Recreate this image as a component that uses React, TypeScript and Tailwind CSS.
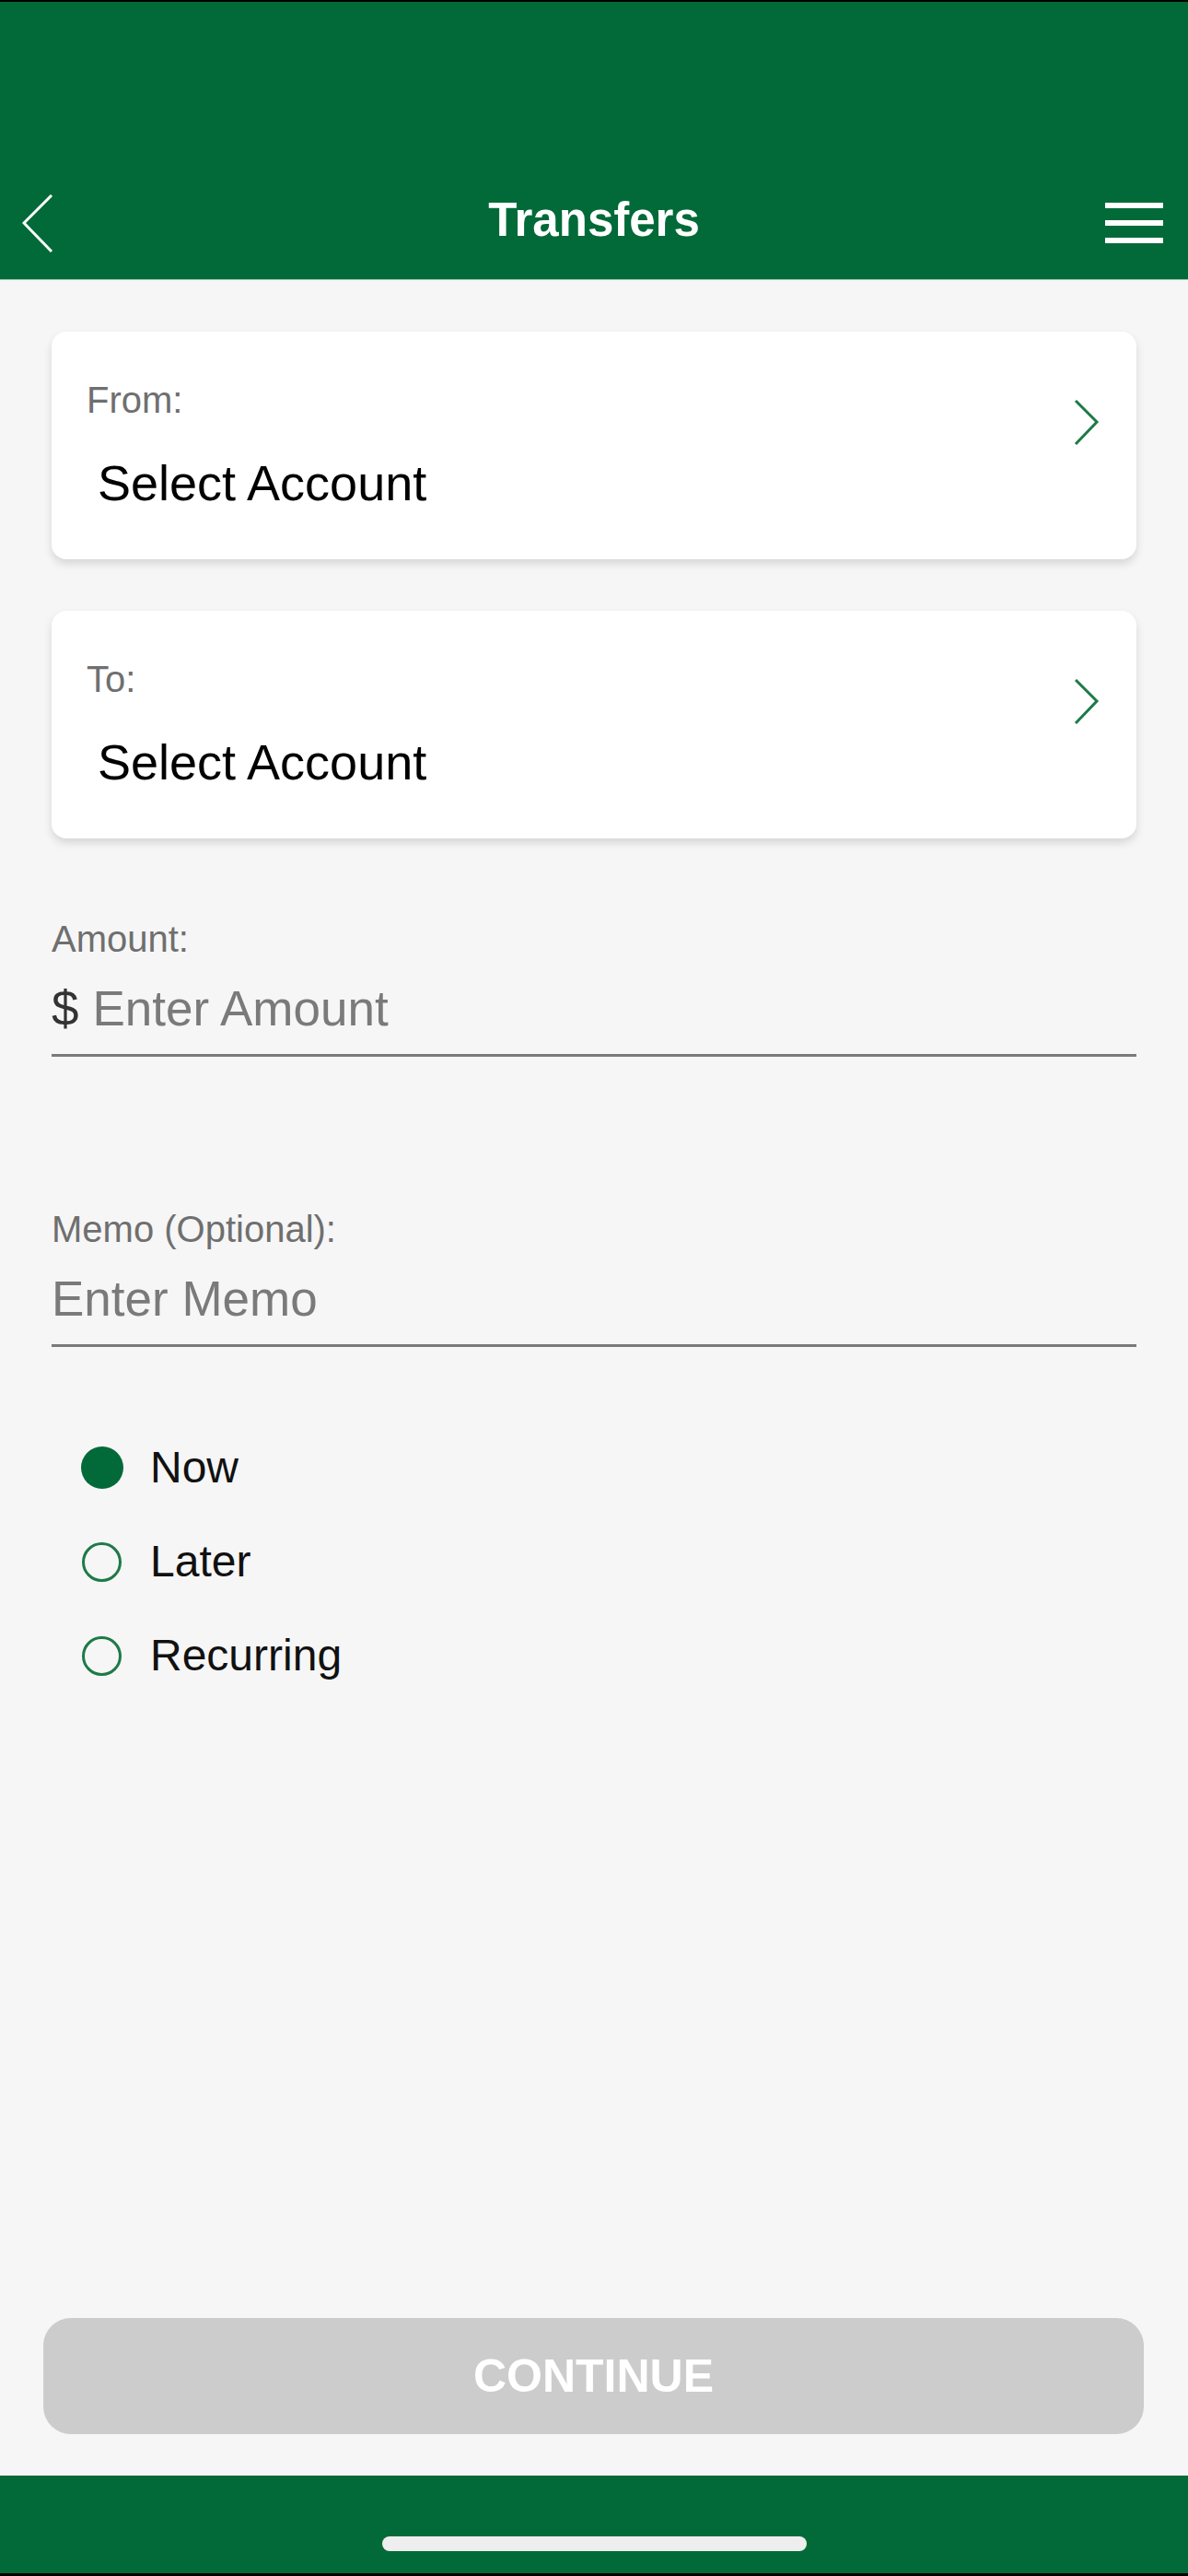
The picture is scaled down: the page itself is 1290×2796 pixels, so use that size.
import { useState } from "react";

function Chevron({ dir, className }: { dir: "left" | "right"; className?: string }) {
  // thin iOS style chevrons
  if (dir === "left") {
    return (
      <svg width="34" height="64" viewBox="0 0 34 64" className={className}>
        <polyline points="32,1 2,31 32,62" fill="none" stroke="white" strokeWidth="3" />
      </svg>
    );
  }
  return (
    <svg width="28" height="50" viewBox="0 0 28 50" className={className}>
      <polyline points="2,1 25,24 2,48" fill="none" stroke="#1d7a47" strokeWidth="3" />
    </svg>
  );
}

function AccountCard({ label }: { label: string }) {
  return (
    <div className="flex h-[247px] items-start justify-between rounded-[16px] bg-white pl-[38px] shadow-[0_5px_10px_rgba(0,0,0,0.13)]">
      <div className="pt-[54px]">
        <div className="text-[40px] leading-[40px] text-[#6f6f6f]">{label}</div>
        <div className="ml-[12px] mt-[43px] text-[54px] leading-[54px] text-black">Select Account</div>
      </div>
      <Chevron dir="right" className="mr-[40px] mt-[74px]" />
    </div>
  );
}

function Field({ label, placeholder, prefix }: { label: string; placeholder: string; prefix?: string }) {
  return (
    <div>
      <div className="text-[40px] leading-[40px] text-[#6f6f6f]">{label}</div>
      <div className="mt-[29px] flex border-b-[3px] border-[#7a7a7a] pb-[23px] text-[53px] leading-[53px]">
        {prefix && <span className="mr-[15px] text-[#333]">{prefix}</span>}
        <span className="text-[#7a7a7a]">{placeholder}</span>
      </div>
    </div>
  );
}

export default function App() {
  const [when, setWhen] = useState("Now");
  const options = ["Now", "Later", "Recurring"];

  return (
    <div
      className="flex h-[2796px] flex-col bg-[#f6f6f6]"
      style={{ fontFamily: '"Liberation Sans", Arial, sans-serif' }}
    >
      {/* Header */}
      <div className="h-[2px] bg-black" />
      <div className="h-[302px] border-b border-[#a3c4b2] bg-[#016a38] pt-[199px]">
        <div className="grid h-[64px] grid-cols-[1fr_auto_1fr] items-center">
          <div className="pl-[24px] pt-[8px]">
            <Chevron dir="left" />
          </div>
          <div className="text-[51px] font-bold text-white">Transfers</div>
          <div className="flex justify-end pr-[27px] pt-[6px]">
            <div className="flex w-[63px] flex-col gap-[13px]">
              <div className="h-[6px] bg-white" />
              <div className="h-[6px] bg-white" />
              <div className="h-[6px] bg-white" />
            </div>
          </div>
        </div>
      </div>

      {/* Form */}
      <div className="flex-1 px-[56px] pt-[56px]">
        <AccountCard label="From:" />
        <div className="mt-[56px]">
          <AccountCard label="To:" />
        </div>

        <div className="mt-[89px]">
          <Field label="Amount:" prefix="$" placeholder="Enter Amount" />
        </div>
        <div className="mt-[167px]">
          <Field label="Memo (Optional):" placeholder="Enter Memo" />
        </div>

        <div className="mt-[80px] pl-[31px]">
          {options.map((o) => (
            <div key={o} className="flex h-[102px] items-center" onClick={() => setWhen(o)}>
              <div className="flex w-[47px] justify-center">
                {when === o ? (
                  <div className="h-[46px] w-[46px] rounded-full bg-[#016a38]" />
                ) : (
                  <div className="h-[43px] w-[43px] rounded-full border-[3px] border-[#1d7a47]" />
                )}
              </div>
              <span className="ml-[29px] text-[48px] leading-[48px] text-[#111]">{o}</span>
            </div>
          ))}
        </div>
      </div>

      {/* Continue */}
      <div className="pb-[45px] pl-[47px] pr-[48px]">
        <button className="flex h-[126px] w-full items-center justify-center rounded-[30px] bg-[#cccccc] text-[50px] font-bold text-white">
          CONTINUE
        </button>
      </div>

      {/* Home indicator bar */}
      <div className="flex h-[106px] justify-center bg-[#016a38] pt-[66px]">
        <div className="h-[16px] w-[461px] rounded-full bg-[#eeeeee]" />
      </div>
      <div className="h-[3px] bg-black" />
    </div>
  );
}
